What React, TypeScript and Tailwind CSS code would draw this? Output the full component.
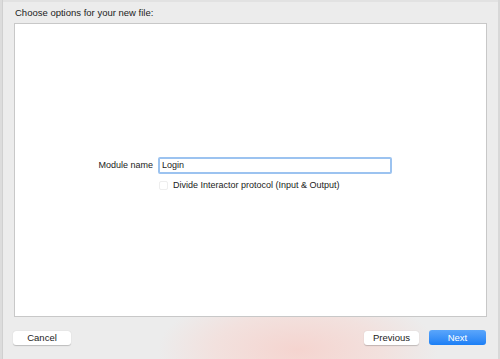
export default function App() {
  return (
    <div className="w-[500px] h-[359px] bg-[#ececec] flex font-['Liberation_Sans',Arial,sans-serif] text-[#222] text-[9px] overflow-hidden">
      <div className="w-[3px] h-full bg-[#dcdcdc] border-r border-[#d0d0d0]" />
      <div className="flex-1 flex flex-col bg-[radial-gradient(ellipse_140px_60px_at_295px_350px,#f5d4cf,#f2e1de_60%,transparent)]">
        <div className="h-[2px] bg-[#e2e2e2]" />
        <div className="h-[21px] flex items-center pl-[12px] pt-[1px] text-[9.5px]">Choose options for your new file:</div>
        <div className="ml-[11px] mr-[11px] h-[294px] bg-white border border-[#c8c8c8] flex flex-col justify-center pt-[9px]">
          <div className="flex items-center">
            <span className="w-[143px] text-right pr-[5px]">Module name</span>
            <div className="w-[234px] h-[17px] border-2 border-[#9cc3f0] rounded-[2px] flex items-center pl-[2px] bg-white">
              Login
            </div>
          </div>
          <div className="flex items-center mt-[5px] ml-[144px]">
            <div className="w-[9px] h-[9px] border border-[#eeeeee] rounded-[2px] mr-[5px]" />
            <span>Divide Interactor protocol (Input &amp; Output)</span>
          </div>
        </div>
        <div className="flex-1 flex items-center pl-[10px] pr-[12px] pb-[1px]">
          <button className="w-[58px] h-[14px] bg-white rounded-[3px] shadow-[0_0.5px_1px_rgba(0,0,0,0.2)] text-[9.5px] leading-none">
            Cancel
          </button>
          <div className="flex-1" />
          <button className="w-[55px] h-[14px] bg-white rounded-[3px] shadow-[0_0.5px_1px_rgba(0,0,0,0.2)] text-[9.5px] leading-none">
            Previous
          </button>
          <button className="ml-[10px] w-[57px] h-[15px] bg-gradient-to-b from-[#5aa6fb] to-[#1a7ff5] rounded-[3px] text-white text-[9.5px] leading-none">
            Next
          </button>
        </div>
      </div>
      <div className="w-[2px] h-full bg-[#d8d8d8]" />
    </div>
  )
}
